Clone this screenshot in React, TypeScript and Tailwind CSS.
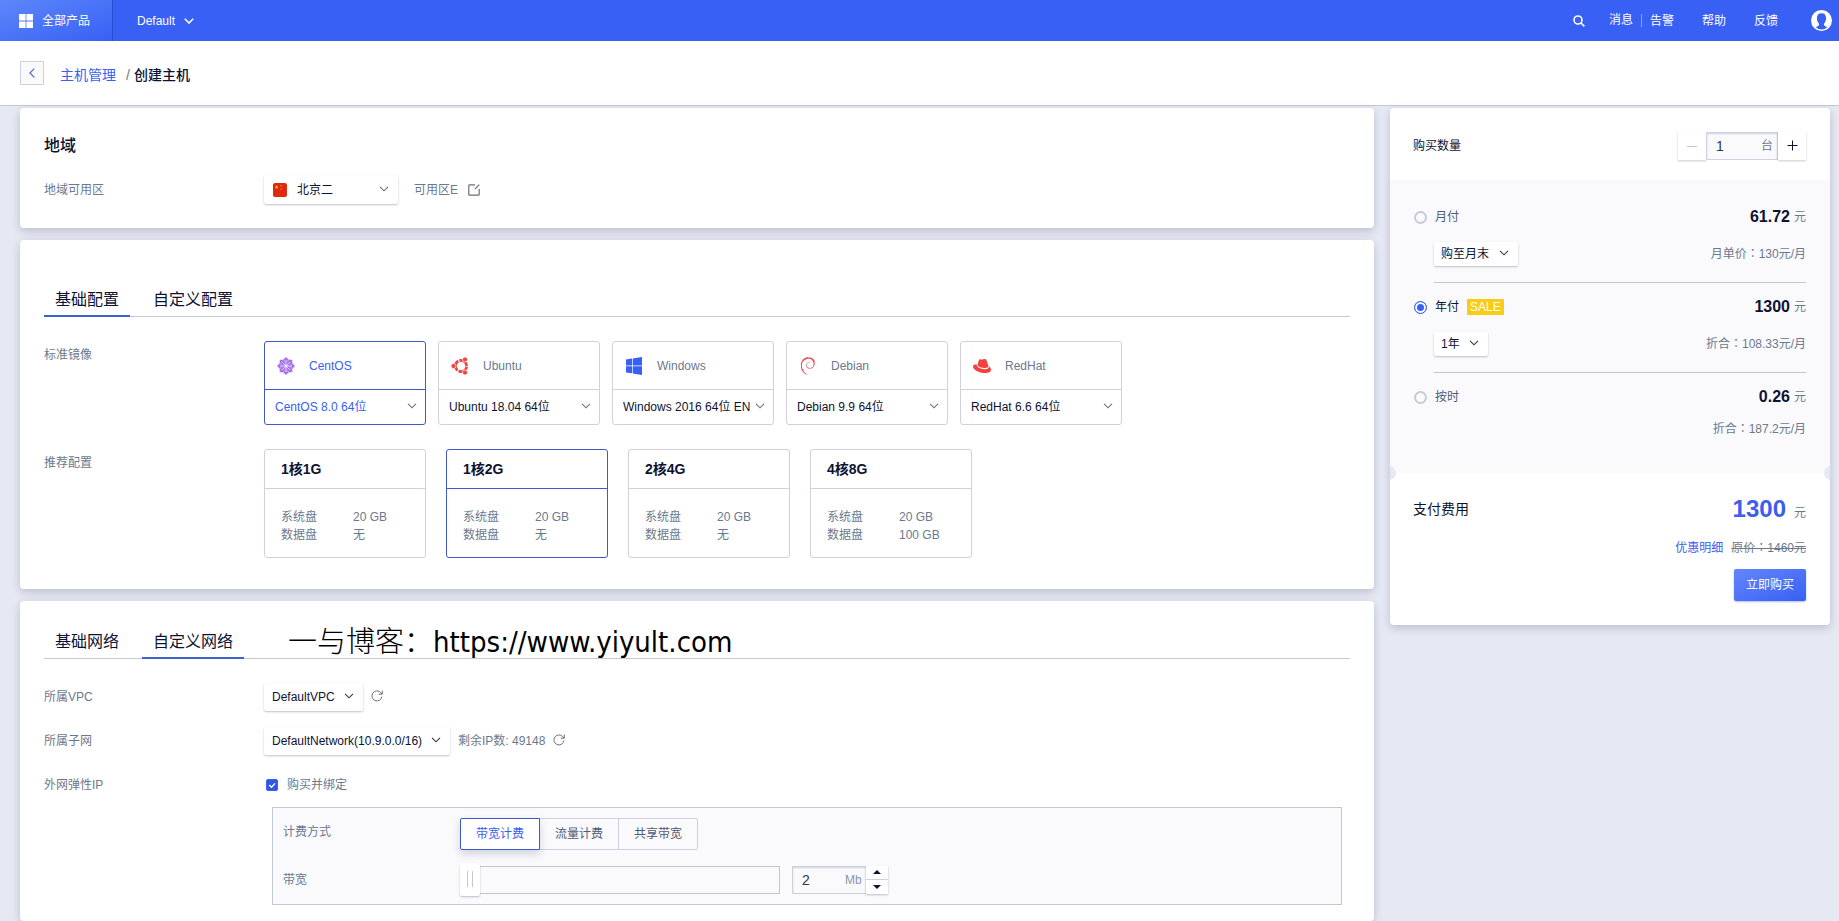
import { useId, useState, type ReactNode } from "react";
import { SiDebian } from "react-icons/si";

function Chevron({ className = "" }: { className?: string }) {
  return (
    <svg viewBox="0 0 10 6" className={`pointer-events-none h-[6px] w-[10px] ${className}`} fill="none" stroke="currentColor" strokeWidth="1.1" aria-hidden="true">
      <path d="M1 .8 5 4.8 9 .8" />
    </svg>
  );
}

function Refresh() {
  return (
    <svg viewBox="0 0 12 12" className="size-3" fill="none" stroke="currentColor" aria-hidden="true">
      <path d="M10.9 6.6A5 5 0 1 1 9.6 2.5L11 4" />
      <path d="M11.3.6V4.2H7.8" />
    </svg>
  );
}

function Select({ label, value, size, icon, tone = "text-[#30364f]" }: { label: string; value: string; size: string; icon?: ReactNode; tone?: string }) {
  return (
    <span className="relative flex items-center">
      {icon}
      <select aria-label={label} className={`appearance-none rounded-xs bg-white text-[#0d1333] shadow-[0_1px_2px_rgba(40,50,90,0.3)] outline-none ${size}`}>
        <option>{value}</option>
      </select>
      <Chevron className={`absolute right-[9px] mb-[2px] ${tone}`} />
    </span>
  );
}

function Row({ label, children, top = false }: { label: string; children: ReactNode; top?: boolean }) {
  return (
    <div className={`flex ${top ? "items-start" : "items-center"}`}>
      <div className={`w-[220px] shrink-0 text-[#6b798e] ${top ? "pt-[6px]" : ""}`}>{label}</div>
      <div className="flex min-w-0 flex-1 items-center">{children}</div>
    </div>
  );
}

function Tabs({ items, initial, children }: { items: string[]; initial: number; children?: ReactNode }) {
  const [active, setActive] = useState(initial);
  return (
    <div className="flex items-end gap-3 border-b border-[#c3cad9]">
      {items.map((item, i) => (
        <button
          key={item}
          onClick={() => setActive(i)}
          className={`-mb-px border-b-2 px-[11px] pt-px pb-[3px] text-base leading-6 text-[#0d1333] ${i === active ? "border-[#3d63c9]" : "border-transparent"}`}
        >
          {item}
        </button>
      ))}
      {children}
    </div>
  );
}

function CentosLogo() {
  return (
    <svg viewBox="0 0 18 18" className="size-[18px]" aria-hidden="true">
      <path d="M9 0l2.800 2.700h3.500v3.500L18 9l-2.700 2.800v3.500h-3.500L9 18l-2.800-2.700H2.700v-3.500L0 9l2.700-2.800V2.700h3.500z" fill="#a873ea" />
      <path d="M9 3v12M3 9h12M4.800 4.800l8.400 8.400M13.200 4.800l-8.400 8.400" stroke="#e9d8fb" strokeWidth=".9" />
      <path d="M6.200 2.700 9 5.500l2.800-2.800M15.300 6.200 12.500 9l2.800 2.800M11.800 15.300 9 12.500l-2.800 2.800M2.700 11.800 5.500 9 2.700 6.200" fill="none" stroke="#d2b2f5" strokeWidth=".8" />
      <circle cx="9" cy="9" r="1.300" fill="#fff" />
    </svg>
  );
}

function UbuntuLogo() {
  return (
    <svg viewBox="0 0 18 18" className="size-[18px]" aria-hidden="true">
      <circle cx="10" cy="9" r="5.6" fill="none" stroke="#f0443f" strokeWidth="2.8" strokeDasharray="10.6 1.13" strokeDashoffset="-0.56" />
      <g fill="#f0443f" stroke="#fff" strokeWidth=".7">
        <circle cx="2.500" cy="9" r="2.500" />
        <circle cx="14" cy="2.500" r="2.500" />
        <circle cx="14" cy="15.500" r="2.500" />
      </g>
    </svg>
  );
}

function WindowsLogo() {
  return (
    <svg viewBox="0 0 18 18" className="size-[18px]" fill="#3860f4" aria-hidden="true">
      <path d="M1 2.500 7 1.600v7H1zM7.700 1.500 17 0v8.600H7.700zM1 9.300h6v7l-6-.9zM7.700 9.300H17V18l-9.300-1.500z" />
    </svg>
  );
}

function RedhatLogo() {
  return (
    <svg viewBox="0 0 18 18" className="size-[18px]" fill="#f5413d" aria-hidden="true">
      <path d="M4.500 8.200 5.800 3.300C6.100 2.200 6.900 2 7.800 2.400c.9.400 1.500.3 2.300-.1 1.500-.6 2.900-.2 3.500 1.200l1.800 5.300c.3 1.600-1.600 2.400-4 2.200-3-.2-6.200-1.300-6.900-2.800z" />
      <path d="M3.700 7.200C1.400 7.300 0 8 0 9.400c0 3.300 6.500 6.600 12 6.600 3.700 0 6-1.300 6-3.300 0-1.300-.8-2.500-2.200-3.400.4 2-1.400 3-4.300 2.900-4.200-.1-8.200-2.200-7.800-5z" />
    </svg>
  );
}

const images = [
  { name: "CentOS", version: "CentOS 8.0 64位", icon: <CentosLogo /> },
  { name: "Ubuntu", version: "Ubuntu 18.04 64位", icon: <UbuntuLogo /> },
  { name: "Windows", version: "Windows 2016 64位 EN", icon: <WindowsLogo /> },
  { name: "Debian", version: "Debian 9.9 64位", icon: <SiDebian className="size-[18px] text-[#e8454d]" /> },
  { name: "RedHat", version: "RedHat 6.6 64位", icon: <RedhatLogo /> },
];

const specs = [
  { name: "1核1G", system: "20 GB", data: "无" },
  { name: "1核2G", system: "20 GB", data: "无" },
  { name: "2核4G", system: "20 GB", data: "无" },
  { name: "4核8G", system: "20 GB", data: "100 GB" },
];

const noteFont = "font-['Liberation_Sans','Noto_Sans_CJK_TC',sans-serif]";

function Plan({ name, price, note, children, badge, checked, onSelect }: {
  name: string; price: string; note: string; children?: ReactNode; badge?: ReactNode; checked: boolean; onSelect: () => void;
}) {
  const id = useId();
  return (
    <div>
      <div className="flex h-6 items-center">
        <input
          id={id}
          type="radio"
          name="plan"
          checked={checked}
          onChange={onSelect}
          className="mr-2 size-[13px] appearance-none rounded-full border-2 border-[#c6cbdb] bg-[#fafafc] checked:border-1 checked:border-[#3860f4] checked:bg-[#3860f4] checked:shadow-[inset_0_0_0_2px_white]"
        />
        <label htmlFor={id} className={checked ? "text-[#0d1333]" : "text-[#4f5b78]"}>{name}</label>
        {badge}
        <span className="ml-auto text-base font-bold text-[#0d1333]">{price}</span>
        <span className="ml-1 text-[#6b798e]">元</span>
      </div>
      <div className={`ml-5 flex h-6 items-center justify-between ${children ? "mt-[13px]" : "mt-2"}`}>
        <div>{children}</div>
        <div className={`text-[#6b798e] ${noteFont}`}>{note}</div>
      </div>
    </div>
  );
}

export default function App() {
  const [image, setImage] = useState(0);
  const [spec, setSpec] = useState(1);
  const [plan, setPlan] = useState(1);
  const [billing, setBilling] = useState(0);
  const card = "rounded-[4px] bg-white px-6 shadow-[0_3px_8px_rgba(50,55,90,0.24)]";
  return (
    <div className="flex min-h-screen flex-col bg-[#e6e9f3] font-['Liberation_Sans','Noto_Sans_CJK_SC',sans-serif] text-xs">
      <header className="flex h-[41px] shrink-0 items-center bg-[#3860f4] text-white">
        <button className="flex h-full w-[113px] items-center gap-[9px] border-r border-[#2a4ed0] bg-linear-to-br from-[#5d86fb] to-[#3860f4] pl-[19px]">
          <svg viewBox="0 0 14 14" className="size-[14px]" fill="currentColor" aria-hidden="true">
            <path d="M0 0h6.6v6.6H0zM7.4 0H14v6.6H7.4zM0 7.4h6.6V14H0zM7.4 7.4H14V14H7.4z" />
          </svg>
          全部产品
        </button>
        <button className="ml-6 flex items-center gap-[9px]">
          Default
          <svg viewBox="0 0 10 6" className="h-[6px] w-[10px]" fill="none" stroke="currentColor" strokeWidth="1.6" aria-hidden="true"><path d="M.8.8 5 5 9.2.8" /></svg>
        </button>
        <nav className="ml-auto flex items-center pr-[7px]">
          <button aria-label="搜索" className="mr-6">
            <svg viewBox="0 0 12 12" className="size-3" fill="none" stroke="currentColor" strokeWidth="1.6" aria-hidden="true"><circle cx="5" cy="5" r="4" /><path d="m8 8 3.4 3.4" /></svg>
          </button>
          <a href="#messages" className="border-r border-[#8aa2fa] pr-2 leading-[13px]">消息</a>
          <a href="#alerts" className="mr-7 pl-2">告警</a>
          <a href="#help" className="mr-7">帮助</a>
          <a href="#feedback" className="mr-[33px]">反馈</a>
          <button aria-label="账户">
            <svg viewBox="0 0 21 21" className="size-[21px]" aria-hidden="true">
              <circle cx="10.5" cy="10.5" r="10.5" fill="#fff" />
              <path d="M10.5 3.2c-3 0-4.6 2-4.6 4.9 0 2.300.8 4.300 2.100 5.600.3 1.500-.5 2.400-3.300 3.400 1.600 1.700 3.500 2.500 5.800 2.500s4.200-.8 5.800-2.500c-2.800-1-3.600-1.900-3.300-3.400 1.300-1.300 2.100-3.300 2.100-5.600 0-2.900-1.600-4.900-4.600-4.900Z" fill="#3860f4" />
            </svg>
          </button>
        </nav>
      </header>

      <div className="flex h-[65px] shrink-0 items-center border-b border-[#c3c8d6] bg-white px-5 text-sm">
        <button aria-label="返回" className="flex size-6 items-center justify-center border border-[#cfd0e6] bg-[#fafafc] text-[#4f68d8]">
          <svg viewBox="0 0 6 10" className="h-[10px] w-[6px]" fill="none" stroke="currentColor" strokeWidth="1.2" aria-hidden="true"><path d="M5.300.6.900 5l4.400 4.400" /></svg>
        </button>
        <nav className="ml-4 flex items-center pt-1">
          <a href="#hosts" className="text-[#3860f4]">主机管理</a>
          <span className="mr-1 ml-[10px] text-[#6b798e]">/</span>
          <span className="font-medium text-[#0d1333]">创建主机</span>
        </nav>
      </div>

      <div className="flex flex-1 gap-4 pt-[2px] pr-[9px] pl-5">
        <main className="flex min-w-0 flex-1 flex-col gap-3">
          <section className={`${card} pt-[26px] pb-6`}>
            <h2 className="text-base leading-6 font-medium text-[#0d1333]">地域</h2>
            <div className="mt-[17px]">
              <Row label="地域可用区">
                <Select
                  label="地域"
                  value="北京二"
                  size="h-[29px] w-[134px] pl-[33px]"
                  tone="text-[#6b6f80]"
                  icon={
                    <svg viewBox="0 0 14 14" className="pointer-events-none absolute left-[9px] size-[14px]" aria-hidden="true">
                      <rect width="14" height="14" rx="2" fill="#de2910" />
                      <path d="m3.600 2.300.5 1.300h1.300l-1 .9.400 1.300-1.200-.8-1.200.8.400-1.300-1-.9h1.300z" fill="#ffde00" />
                      <path d="M7 2h1v1H7zM8.300 3.300h.8v.8h-.8zM8.300 5h.8v.8h-.8zM7 6.300h.8v.8H7z" fill="#f79a1a" />
                    </svg>
                  }
                />
                <span className="mr-[10px] ml-4 text-[#6b798e]">可用区E</span>
                <button aria-label="编辑可用区" className="text-[#6b6f80]">
                  <svg viewBox="0 0 12 12" className="size-3" fill="none" stroke="currentColor" strokeWidth="1.200" aria-hidden="true"><path d="M7 .8H1.500a.7.7 0 0 0-.7.7v9a.7.7 0 0 0 .7.7h9a.7.7 0 0 0 .7-.7V5M7 5 11.300.7" /></svg>
                </button>
              </Row>
            </div>
          </section>

          <section className={`${card} pt-[47px] pb-[31px]`}>
            <Tabs items={["基础配置", "自定义配置"]} initial={0} />
            <div className="mt-6 flex flex-col gap-6">
              <Row label="标准镜像" top>
                <div className="flex flex-wrap gap-3">
                  {images.map((os, i) => (
                    <div key={os.name} className={`w-[162px] overflow-hidden rounded-[3px] border ${i === image ? "border-[#4059c8]" : "border-[#cfd2de]"}`}>
                      <button
                        onClick={() => setImage(i)}
                        className={`flex h-12 w-full items-center gap-[14px] border-b pl-3 ${i === image ? "border-[#4059c8] text-[#3860f4]" : "border-[#cfd2de] text-[#6b798e]"}`}
                      >
                        {os.icon}
                        {os.name}
                      </button>
                      <div className="relative flex items-center">
                        <select aria-label={`${os.name} 版本`} className={`h-[34px] w-full appearance-none pl-[10px] outline-none ${i === image ? "text-[#3860f4]" : "text-[#0d1333]"}`}>
                          <option>{os.version}</option>
                        </select>
                        <Chevron className="absolute right-[8px] mb-[2px] text-[#6b6f80]" />
                      </div>
                    </div>
                  ))}
                </div>
              </Row>
              <Row label="推荐配置" top>
                <div className="flex flex-wrap gap-5">
                  {specs.map((s, i) => (
                    <button key={s.name} onClick={() => setSpec(i)} className={`w-[162px] rounded-[3px] border text-left ${i === spec ? "border-[#4059c8]" : "border-[#cfd2de]"}`}>
                      <span className={`block border-b px-4 text-sm leading-[38px] font-bold text-[#0d1333] ${i === spec ? "border-[#4059c8]" : "border-[#cfd2de]"}`}>{s.name}</span>
                      <span className="grid grid-cols-[72px_1fr] px-4 pt-[19px] pb-[13px] leading-[18px] text-[#6b798e]">
                        <span>系统盘</span>
                        <span>{s.system}</span>
                        <span>数据盘</span>
                        <span>{s.data}</span>
                      </span>
                    </button>
                  ))}
                </div>
              </Row>
            </div>
          </section>

          <section className={`${card} flex-1 pt-7 pb-4`}>
            <Tabs items={["基础网络", "自定义网络"]} initial={1}>
              <p className="ml-8 pb-1 font-['DejaVu_Sans_Condensed','Noto_Sans_CJK_SC',sans-serif] text-[29px] leading-6 text-black">
                <span className="font-light">一与博客：</span>https://www.yiyult.com
              </p>
            </Tabs>
            <div className="mt-6 flex flex-col gap-4">
              <Row label="所属VPC">
                <Select label="所属VPC" value="DefaultVPC" size="h-7 w-[99px] pl-2" />
                <button aria-label="刷新VPC" className="ml-2 pb-[2px] text-[#6b6f80]"><Refresh /></button>
              </Row>
              <Row label="所属子网">
                <Select label="所属子网" value="DefaultNetwork(10.9.0.0/16)" size="h-7 w-[186px] pl-2" />
                <span className="mx-2 text-[#6b798e]">剩余IP数: 49148</span>
                <button aria-label="刷新子网" className="pb-[2px] text-[#6b6f80]"><Refresh /></button>
              </Row>
              <Row label="外网弹性IP">
                <label className="flex h-7 items-center gap-[9px] pl-[2px] text-[#6b798e]">
                  <span className="relative flex">
                    <input type="checkbox" defaultChecked className="peer size-[12px] appearance-none rounded-[2px] border border-[#c3cad9] checked:border-[#3860f4] checked:bg-[#3355e0]" />
                    <svg viewBox="0 0 11 11" className="pointer-events-none absolute hidden size-[12px] peer-checked:block" fill="none" stroke="#fff" strokeWidth="1.3" aria-hidden="true"><path d="m3 5.500 2 2L8.300 4" /></svg>
                  </span>
                  购买并绑定
                </label>
              </Row>
            </div>
            <div className="mt-2 mr-2 ml-[228px] border border-[#c3c7d3] bg-[#fafafc] px-[10px] pt-[10px] pb-2 text-[#6b798e]">
              <div className="flex">
                <div className="w-[177px] shrink-0 pt-[6px]">计费方式</div>
                <div className="flex">
                  {["带宽计费", "流量计费", "共享带宽"].map((name, i) => (
                    <button
                      key={name}
                      onClick={() => setBilling(i)}
                      className={`h-8 w-20 border not-first:-ml-px first:rounded-l-[2px] last:rounded-r-[2px] ${i === billing ? "relative border-[#4059c8] bg-white text-[#3860f4] shadow-[0_4px_8px_rgba(50,55,90,0.2)]" : "border-[#cfd0e6] text-[#4f5b78]"}`}
                    >
                      {name}
                    </button>
                  ))}
                </div>
              </div>
              <div className="mt-[13px] flex items-center">
                <label htmlFor="bandwidth" className="w-[177px] shrink-0">带宽</label>
                <input
                  id="bandwidth"
                  type="range"
                  min="2"
                  max="200"
                  defaultValue="2"
                  className="h-[33px] w-80 appearance-none bg-transparent [&::-webkit-slider-runnable-track]:h-7 [&::-webkit-slider-runnable-track]:border [&::-webkit-slider-runnable-track]:border-[#c3c7d3] [&::-webkit-slider-thumb]:-mt-1 [&::-webkit-slider-thumb]:-ml-px [&::-webkit-slider-thumb]:h-[33px] [&::-webkit-slider-thumb]:w-5 [&::-webkit-slider-thumb]:appearance-none [&::-webkit-slider-thumb]:rounded-xs [&::-webkit-slider-thumb]:bg-white [&::-webkit-slider-thumb]:bg-[linear-gradient(90deg,#c3c7d3_1px,transparent_1px,transparent_5px,#c3c7d3_5px)] [&::-webkit-slider-thumb]:bg-[length:6px_16px] [&::-webkit-slider-thumb]:bg-center [&::-webkit-slider-thumb]:bg-no-repeat [&::-webkit-slider-thumb]:shadow-[0_1px_2px_rgba(40,50,90,0.3)]"
                />
                <div className="ml-3 flex h-7 items-center border border-r-0 border-[#cfd0dd] bg-[#fafafc] pr-1 pl-[9px] shadow-[inset_0_1px_2px_rgba(50,55,90,0.2)]">
                  <input aria-label="带宽数值" defaultValue="2" className="w-[43px] bg-transparent text-sm text-[#30364f] outline-none" />
                  <span className="text-[#8b93ad]">Mb</span>
                </div>
                <div className="flex h-7 w-[22px] flex-col divide-y divide-[#cfd0dd] bg-white shadow-[0_1px_2px_rgba(40,50,90,0.3)]">
                  <button aria-label="增加带宽" className="flex flex-1 items-center justify-center"><svg viewBox="0 0 8 4" className="h-1 w-2" aria-hidden="true"><path d="M0 4 4 0l4 4z" fill="#0d1333" /></svg></button>
                  <button aria-label="减少带宽" className="flex flex-1 items-center justify-center"><svg viewBox="0 0 8 4" className="h-1 w-2" aria-hidden="true"><path d="m0 0 4 4 4-4z" fill="#0d1333" /></svg></button>
                </div>
              </div>
            </div>
          </section>
        </main>

        <aside className="w-[440px] shrink-0">
          <div className="overflow-hidden rounded-[4px] bg-white shadow-[0_3px_8px_rgba(50,55,90,0.24)]">
            <div className="flex h-[72px] items-center pt-[3px] pr-6 pl-[23px]">
              <label htmlFor="quantity" className="text-[#0d1333]">购买数量</label>
              <button aria-label="减少数量" className="ml-auto flex h-7 w-7 items-center justify-center bg-white text-[#c3c7d3] shadow-[0_1px_2px_rgba(40,50,90,0.25)]">
                <svg viewBox="0 0 10 10" className="size-[10px]" stroke="currentColor" aria-hidden="true"><path d="M0 5.500h10" /></svg>
              </button>
              <div className="flex h-7 items-center border border-[#cfd0e6] bg-[#fafafc] pr-1 pl-[9px] shadow-[inset_0_1px_2px_rgba(50,55,90,0.2)]">
                <input id="quantity" defaultValue="1" className="w-[45px] bg-transparent text-sm text-[#30364f] outline-none" />
                <span className="text-[#6b798e]">台</span>
              </div>
              <button aria-label="增加数量" className="flex h-7 w-7 items-center justify-center bg-white text-[#0d1333] shadow-[0_1px_2px_rgba(40,50,90,0.25)]">
                <svg viewBox="0 0 11 11" className="size-[11px]" stroke="currentColor" aria-hidden="true"><path d="M.5 5.500h10M5.500.5v10" /></svg>
              </button>
            </div>
            <div className="relative bg-[#fafafc] px-6 pt-[25px] pb-8">
              <Plan name="月付" price="61.72" note="月单价：130元/月" checked={plan === 0} onSelect={() => setPlan(0)}>
                <Select label="购买时长" value="购至月末" size="h-6 w-[84px] pl-[7px]" />
              </Plan>
              <hr className="mt-4 mb-3 ml-5 border-[#c3c7d3]" />
              <Plan
                name="年付"
                price="1300"
                note="折合：108.33元/月"
                checked={plan === 1}
                onSelect={() => setPlan(1)}
                badge={<span className="ml-2 bg-[#facc15] px-[3px] leading-4 text-white">SALE</span>}
              >
                <Select label="购买年限" value="1年" size="h-6 w-[54px] pl-[7px]" />
              </Plan>
              <hr className="mt-4 mb-3 ml-5 border-[#c3c7d3]" />
              <Plan name="按时" price="0.26" note="折合：187.2元/月" checked={plan === 2} onSelect={() => setPlan(2)} />
              <span className="absolute -bottom-[7px] -left-2 size-[14px] rounded-full bg-[#e6e9f3]" />
              <span className="absolute -right-2 -bottom-[7px] size-[14px] rounded-full bg-[#e6e9f3]" />
            </div>
            <div className="flex flex-col items-end pt-5 pr-6 pb-6 pl-[23px] text-[#6b798e]">
              <div className="flex w-full items-center">
                <span className="mr-auto text-sm text-[#0d1333]">支付费用</span>
                <span className="flex items-baseline gap-2">
                  <span className="text-2xl leading-8 font-bold text-[#3d5cf0]">1300</span>
                  <span>元</span>
                </span>
              </div>
              <div className="mt-[15px] flex items-center gap-2 leading-4">
                <a href="#discount" className="text-[#3860f4]">优惠明细</a>
                <del className={noteFont}>原价：1460元</del>
              </div>
              <button className="mt-[13px] h-8 w-[72px] rounded-xs bg-linear-to-br from-[#6485fb] to-[#3860f4] text-white shadow-[0_1px_2px_rgba(56,96,244,0.4)]">立即购买</button>
            </div>
          </div>
        </aside>
      </div>
    </div>
  );
}
